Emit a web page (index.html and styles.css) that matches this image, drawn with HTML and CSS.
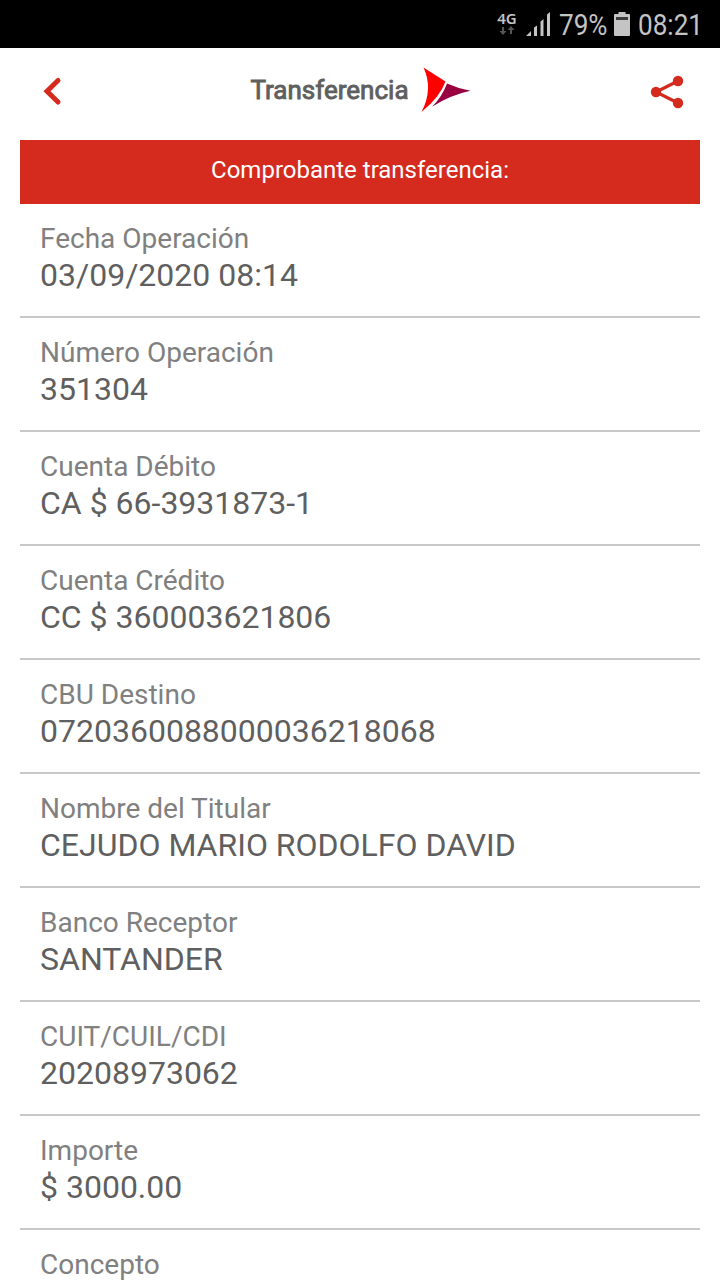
FILE: index.html
```html
<!DOCTYPE html>
<html lang="es">
<head>
  <meta charset="UTF-8">
  <meta name="viewport" content="width=device-width, initial-scale=1.0">
  <title>Transferencia</title>
  <link rel="stylesheet" href="styles.css">
</head>
<body>
  <div class="status-bar">
    <div class="network">
      <span class="network-type">4G</span>
      <svg width="16" height="10" viewBox="0 0 16 10" fill="#555">
        <path d="M3 1h2v4h2.500L4 9 .5 5H3zM11 8h2V4h2.500L12 0 8.500 4H11z"/>
      </svg>
    </div>
    <svg class="signal" width="24" height="24" viewBox="0 0 24 24" fill="#c4c4c4">
      <path d="M0 24l5-5v5zM8 15.500l3-2V24H8zM14.500 9.500l3-2.500v17h-3zM21 2.500L24 0v24h-3z"/>
    </svg>
    <span class="battery-text"><span class="narrow">79%</span></span>
    <svg class="battery" width="16" height="24" viewBox="0 0 16 24">
      <path fill="#c4c4c4" d="M4.500 0h7v2H15q1 0 1 1v20q0 1-1 1H1q-1 0-1-1V3q0-1 1-1h3.500z"/>
      <path fill="#3c3c3c" d="M2 5h12v3H2z"/>
    </svg>
    <span class="time"><span class="narrow">08:21</span></span>
  </div>

  <header class="header">
    <a href="#" class="back">
      <svg width="20" height="30" viewBox="0 0 20 30">
        <path d="M15 4.500L4 15.300 15 26" fill="none" stroke="#d52b1e" stroke-width="5" stroke-linecap="round" stroke-linejoin="miter"/>
      </svg>
    </a>
    <div class="brand">
      <h1 class="title">Transferencia</h1>
      <svg class="logo" width="50" height="46" viewBox="0 0 50 46">
        <path fill="#ff0000" d="M2.500 .5L24.500 14.500Q19 30 .5 45Q12.500 22 2.500 .5z"/>
        <path fill="#990040" d="M26 16.500Q37 21.500 49.500 23.700Q29 28 11 39.800Q21 30 26 16.500z"/>
      </svg>
    </div>
    <a href="#" class="share">
      <svg width="34" height="34" viewBox="0 0 34 34" fill="#d52b1e">
        <path d="M28 6L6 17l22 11" fill="none" stroke="#d52b1e" stroke-width="3.200"/>
        <circle cx="28" cy="6" r="5.200"/>
        <circle cx="6" cy="17" r="5.200"/>
        <circle cx="28" cy="28" r="5.200"/>
      </svg>
    </a>
  </header>

  <main class="receipt">
    <h2 class="receipt-title">Comprobante transferencia:</h2>
    <div class="row">
      <p class="label">Fecha Operación</p>
      <p class="value">03/09/2020 08:14</p>
    </div>
    <div class="row">
      <p class="label">Número Operación</p>
      <p class="value">351304</p>
    </div>
    <div class="row">
      <p class="label">Cuenta Débito</p>
      <p class="value">CA $ 66-3931873-1</p>
    </div>
    <div class="row">
      <p class="label">Cuenta Crédito</p>
      <p class="value">CC $ 360003621806</p>
    </div>
    <div class="row">
      <p class="label">CBU Destino</p>
      <p class="value">0720360088000036218068</p>
    </div>
    <div class="row">
      <p class="label">Nombre del Titular</p>
      <p class="value">CEJUDO MARIO RODOLFO DAVID</p>
    </div>
    <div class="row">
      <p class="label">Banco Receptor</p>
      <p class="value">SANTANDER</p>
    </div>
    <div class="row">
      <p class="label">CUIT/CUIL/CDI</p>
      <p class="value">20208973062</p>
    </div>
    <div class="row">
      <p class="label">Importe</p>
      <p class="value">$ 3000.00</p>
    </div>
    <div class="row">
      <p class="label">Concepto</p>
    </div>
  </main>
</body>
</html>
```
FILE: styles.css
```css
* {
  box-sizing: border-box;
  margin: 0;
  padding: 0;
}

body {
  height: 1280px;
  overflow: hidden;
  background: #fff;
  font-family: Roboto, "Liberation Sans", sans-serif;
}

.status-bar {
  display: flex;
  align-items: center;
  justify-content: flex-end;
  height: 48px;
  padding-right: 17px;
  background: #000;
  color: #c4c4c4;
  font-size: 30px;
}

.network {
  display: flex;
  flex-direction: column;
  align-items: center;
  width: 20px;
  margin-right: 9px;
  padding-bottom: 2px;
}

.network-type {
  font: 600 15px/15px "Noto Sans", sans-serif;
}

.signal {
  margin-right: 1px;
}

.battery-text {
  width: 48px;
  margin: 0 7px 0 8px;
}

.battery {
  margin-right: 8px;
}

.time {
  width: 65px;
}

/* condensed digits of the system font */
.narrow {
  display: inline-block;
  transform: scaleX(0.87);
  transform-origin: left;
}

.header {
  display: flex;
  align-items: center;
  justify-content: space-between;
  height: 92px;
  padding: 0 36px 5px 43px;
}

.header svg {
  display: block;
}

.back {
  margin-bottom: 1px;
}

.brand {
  display: flex;
  align-items: center;
  gap: 12px;
  margin: 0 0 4px 8px;
}

.title {
  color: #5f5f5f;
  font-size: 26px;
  font-weight: 400;
  -webkit-text-stroke: 0.9px #5f5f5f;
}

.receipt {
  margin: 0 20px;
}

.receipt-title {
  height: 64px;
  background: #d52b1e;
  color: #fff;
  font-size: 24px;
  font-weight: 400;
  line-height: 60px;
  text-align: center;
}

.row {
  height: 114px;
  padding: 18px 20px 0;
  border-bottom: 2px solid #c8c8c8;
}

.label {
  color: #808080;
  font-size: 28px;
  line-height: 34px;
}

.value {
  color: #5f5f5f;
  font-size: 32px;
  line-height: 38px;
}
```
